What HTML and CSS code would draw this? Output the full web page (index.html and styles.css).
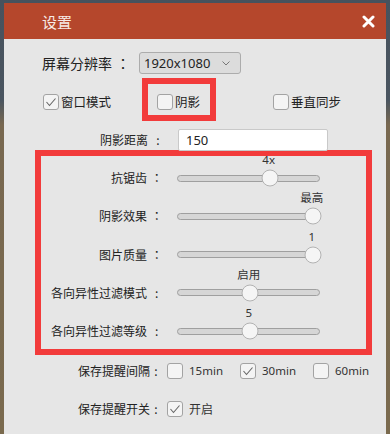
FILE: index.html
```html
<!DOCTYPE html>
<html lang="zh-CN">
<head>
<meta charset="utf-8">
<title>设置</title>
<link rel="stylesheet" href="styles.css">
</head>
<body>
<div class="dialog">
  <div class="titlebar">
    <span class="title">设置</span>
    <svg class="close" width="13" height="13" viewBox="0 0 13 13"><path d="M2 2 L11 11 M11 2 L2 11" stroke="#fff" stroke-width="3" stroke-linecap="round"/></svg>
  </div>

  <div class="res-row">
    <span class="res-label">屏幕分辨率<span class="colon">：</span></span>
    <div class="combo">
      <span>1920x1080</span>
      <svg class="chev" width="8" height="5" viewBox="0 0 8 5"><polyline points="0.5,0.5 4,4 7.5,0.5" fill="none" stroke="#777" stroke-width="1"/></svg>
    </div>
  </div>

  <div class="check-row">
    <div class="check window-mode">
      <span class="box"><svg width="14" height="14" viewBox="0 0 14 14"><polyline points="2.5,7 5.5,10.5 11.5,3.5" fill="none" stroke="#666" stroke-width="1.1"/></svg></span>
      <span class="ctext">窗口模式</span>
    </div>
    <div class="hl-small">
      <div class="check">
        <span class="box"></span>
        <span class="ctext">阴影</span>
      </div>
    </div>
    <div class="check vsync">
      <span class="box"></span>
      <span class="ctext">垂直同步</span>
    </div>
  </div>

  <div class="dist-row">
    <span class="dist-label">阴影距离<span class="colon">:</span></span>
    <div class="input">150</div>
  </div>

  <div class="hl-big">
    <div class="slider">
      <div class="s-value"><span style="left:92px">4x</span></div>
      <div class="s-label">抗锯齿<span class="colon">：</span></div>
      <div class="track"><span class="knob" style="left:92px"></span></div>
    </div>
    <div class="slider">
      <div class="s-value"><span style="left:135px">最高</span></div>
      <div class="s-label">阴影效果<span class="colon">：</span></div>
      <div class="track"><span class="knob" style="left:135px"></span></div>
    </div>
    <div class="slider">
      <div class="s-value"><span style="left:135px">1</span></div>
      <div class="s-label">图片质量<span class="colon">：</span></div>
      <div class="track"><span class="knob" style="left:135px"></span></div>
    </div>
    <div class="slider">
      <div class="s-value"><span style="left:72px">启用</span></div>
      <div class="s-label">各向异性过滤模式<span class="colon">:</span></div>
      <div class="track"><span class="knob" style="left:72px"></span></div>
    </div>
    <div class="slider">
      <div class="s-value"><span style="left:72px">5</span></div>
      <div class="s-label">各向异性过滤等级<span class="colon">:</span></div>
      <div class="track"><span class="knob" style="left:72px"></span></div>
    </div>
  </div>

  <div class="save-row first">
    <span class="save-label">保存提醒间隔<span class="colon">:</span></span>
    <div class="opt">
      <span class="box"></span><span class="otext">15min</span>
    </div>
    <div class="opt">
      <span class="box"><svg width="14" height="14" viewBox="0 0 14 14"><polyline points="2.5,7 5.5,10.5 11.5,3.5" fill="none" stroke="#666" stroke-width="1.1"/></svg></span><span class="otext">30min</span>
    </div>
    <div class="opt">
      <span class="box"></span><span class="otext">60min</span>
    </div>
  </div>

  <div class="save-row second">
    <span class="save-label">保存提醒开关<span class="colon">:</span></span>
    <div class="opt">
      <span class="box"><svg width="14" height="14" viewBox="0 0 14 14"><polyline points="2.5,7 5.5,10.5 11.5,3.5" fill="none" stroke="#666" stroke-width="1.1"/></svg></span><span class="otext cjk">开启</span>
    </div>
  </div>
</div>
</body>
</html>
```

FILE: styles.css
```css
* { box-sizing: border-box; }

html, body {
  margin: 0;
  padding: 0;
  height: 434px;
  overflow: hidden;
}

body {
  background: linear-gradient(to bottom, #47525d 0, #4a5560 100px, #786850 125px, #7a6a4e 100%);
  font-family: "Noto Sans", "Noto Sans CJK SC", sans-serif;
  font-size: 12px;
  color: #222;
  padding-top: 3px;
}

.dialog {
  margin-left: 4px;
  width: 382px;
  height: 431px;
  background: #e6e6e6;
}

.titlebar {
  height: 36px;
  background: #b5472c;
  display: flex;
  align-items: center;
  justify-content: space-between;
  padding-left: 38px;
  padding-right: 11px;
}

.title {
  color: #f7ebe6;
  font-size: 15px;
  font-family: "Noto Sans CJK SC", sans-serif;
  padding-top: 1px;
}

.close { display: block; }

/* shared colon glyph box (centered) */
.colon {
  display: inline-block;
  width: 12px;
  text-align: center;
  font-family: "Noto Sans CJK TC", "Noto Sans", sans-serif;
}

/* resolution row */
.res-row {
  margin-top: 13px;
  height: 22px;
  display: flex;
  align-items: center;
  padding-left: 38px;
}

.res-label {
  width: 97px;
  font-family: "Noto Sans CJK SC", sans-serif;
  font-size: 14px;
}

.res-label .colon {
  width: 14px;
  margin-left: 4px;
}

.combo {
  width: 102px;
  height: 22px;
  border: 1px solid #acacac;
  border-radius: 3px;
  background: #dcdcdc;
  display: flex;
  align-items: center;
  justify-content: space-between;
  padding-left: 4px;
  padding-right: 10px;
  font-size: 13px;
  color: #222;
}

.chev { display: block; }

/* checkbox row */
.check-row {
  margin-top: 4px;
  height: 43px;
  display: flex;
  padding-left: 39px;
}

.check {
  display: flex;
  align-items: center;
  padding-top: 4px;
  gap: 2px;
}

.window-mode { width: 99px; }

.hl-small {
  width: 74px;
  height: 43px;
  border: 6px solid #f23b3b;
  padding-left: 9px;
  display: flex;
}

.vsync { margin-left: 57px; }

.box {
  width: 16px;
  height: 16px;
  border: 1px solid #a3a3a3;
  border-radius: 3px;
  background: #f4f4f4;
  display: flex;
  align-items: center;
  justify-content: center;
  flex: none;
}

.box svg { display: block; }

.ctext {
  font-family: "Noto Sans CJK SC", sans-serif;
  font-size: 12.5px;
}

/* distance row */
.dist-row {
  margin-top: 8px;
  height: 22px;
  display: flex;
  align-items: center;
  padding-left: 38px;
}

.dist-label {
  width: 122px;
  text-align: right;
  margin-right: 14px;
}

.dist-label .colon { margin-left: 4px; }

.input {
  width: 150px;
  height: 22px;
  background: #fff;
  border: 1px solid #c9c9c9;
  border-radius: 2px;
  padding-left: 7px;
  font-size: 13px;
  line-height: 20px;
  color: #222;
}

/* big highlight with sliders */
.hl-big {
  margin-top: -1px;
  margin-left: 31px;
  width: 337px;
  height: 205px;
  border: 6px solid #f23b3b;
  display: flex;
  flex-direction: column;
  gap: 2.25px;
}

.slider {
  display: grid;
  grid-template-columns: 121.7px 143.3px;
  grid-template-rows: 8px 28px;
  column-gap: 14px;
  align-items: center;
}

.s-value {
  grid-column: 2;
  grid-row: 1;
  position: relative;
  height: 8px;
}

.s-value span {
  position: absolute;
  top: 0;
  transform: translateX(-50%);
  font-size: 11.5px;
  line-height: 8px;
  color: #333;
  white-space: nowrap;
}

.s-label {
  grid-column: 1;
  grid-row: 2;
  text-align: right;
  white-space: nowrap;
}

.s-label .colon { margin-left: 3.7px; }

.track {
  grid-column: 2;
  grid-row: 2;
  position: relative;
  height: 7px;
  border: 1px solid #9f9f9f;
  border-radius: 4px;
  background: #d6d6d6;
}

.knob {
  position: absolute;
  top: 50%;
  width: 17px;
  height: 17px;
  border-radius: 50%;
  background: #f5f5f5;
  border: 1px solid #b2b2b2;
  transform: translate(-50%, -50%);
}

/* save rows */
.save-row {
  display: flex;
  align-items: center;
  height: 18px;
  padding-left: 37px;
}

.save-row.first { margin-top: 6.7px; }
.save-row.second { margin-top: 20.3px; }

.save-label {
  width: 121px;
  text-align: right;
  margin-right: 5px;
  white-space: nowrap;
}

.opt {
  width: 73px;
  display: flex;
  align-items: center;
  gap: 6px;
}

.otext {
  font-size: 11.5px;
  color: #333;
}

.otext.cjk { font-size: 12px; }
```
